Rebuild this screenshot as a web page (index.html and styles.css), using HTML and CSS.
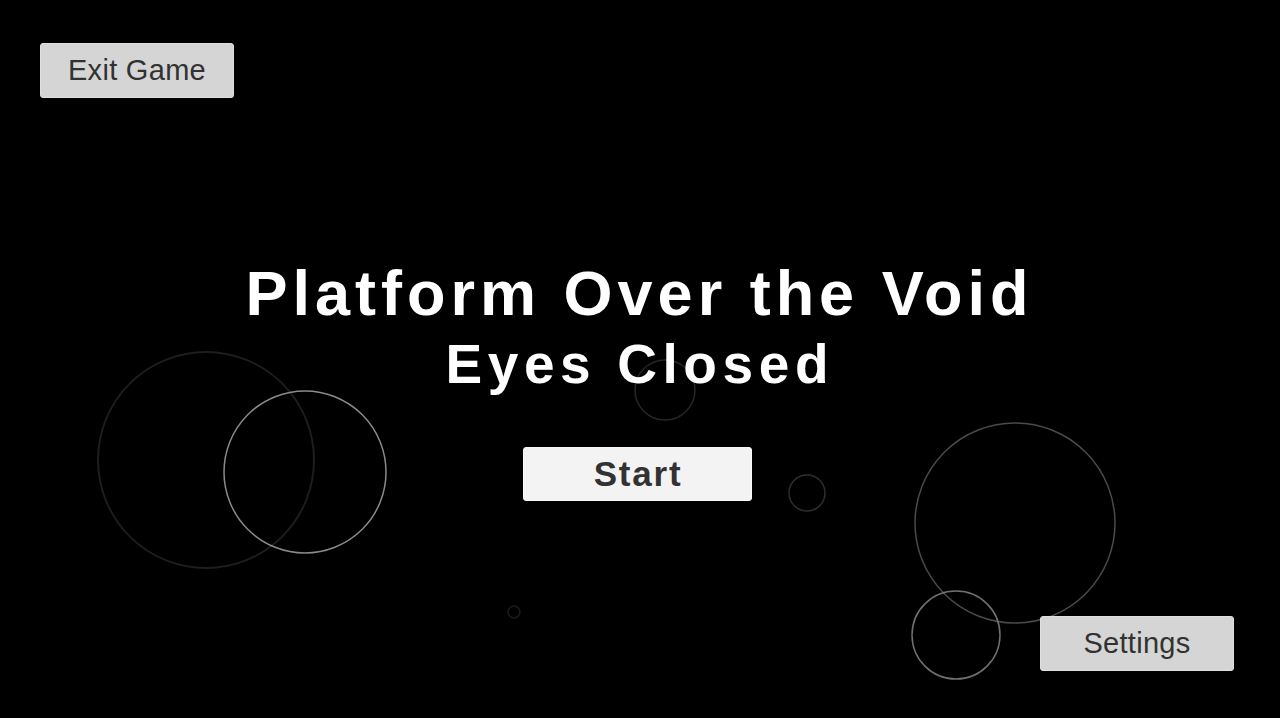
FILE: index.html
```html
<!DOCTYPE html>
<html lang="en">
<head>
<meta charset="utf-8">
<title>Platform Over the Void</title>
<link rel="stylesheet" href="styles.css">
</head>
<body>
<main class="screen">
  <svg class="backdrop" width="1280" height="718" viewBox="0 0 1280 718" aria-hidden="true">
    <circle cx="206" cy="460" r="108" stroke="#1d1d1d" stroke-width="2"/>
    <circle cx="305" cy="472" r="81" stroke="#8a8a8a" stroke-width="1.5"/>
    <circle cx="665" cy="390" r="30" stroke="#262626" stroke-width="1.5"/>
    <circle cx="807" cy="493" r="18" stroke="#2e2e2e" stroke-width="1.5"/>
    <circle cx="1015" cy="523" r="100" stroke="#4a4a4a" stroke-width="1.5"/>
    <circle cx="956" cy="635" r="44" stroke="#707070" stroke-width="1.5"/>
    <circle cx="514" cy="612" r="6" stroke="#1c1c1c" stroke-width="1.5"/>
  </svg>

  <div class="top-bar">
    <button class="btn btn-muted" type="button">Exit Game</button>
  </div>

  <section class="menu">
    <h1 class="title">Platform Over the Void</h1>
    <h2 class="subtitle">Eyes Closed</h2>
    <button class="btn btn-start" type="button">Start</button>
  </section>

  <div class="bottom-bar">
    <button class="btn btn-muted" type="button">Settings</button>
  </div>
</main>
</body>
</html>
```

FILE: styles.css
```css
* {
  box-sizing: border-box;
}

html,
body {
  margin: 0;
  padding: 0;
  background: #000;
}

body {
  font-family: "Liberation Sans", Arial, sans-serif;
  overflow: hidden;
}

.screen {
  position: relative;
  width: 1280px;
  height: 718px;
  display: grid;
  grid-template-rows: auto 1fr auto;
  padding: 43px 46px 47px 40px;
  background: #000;
}

/* decorative rings drawn behind the menu */
.backdrop {
  position: absolute;
  left: 0;
  top: 0;
  fill: none;
  z-index: 0;
}

.top-bar,
.menu,
.bottom-bar {
  position: relative;
  z-index: 1;
}

.top-bar {
  display: flex;
  justify-content: flex-start;
}

.bottom-bar {
  display: flex;
  justify-content: flex-end;
}

.menu {
  display: flex;
  flex-direction: column;
  align-items: center;
  padding-top: 164px;
}

.title {
  margin: 0 -5px 0 0;
  font-size: 63px;
  line-height: 1;
  font-weight: 700;
  letter-spacing: 5px;
  color: #fff;
}

.subtitle {
  margin: 12px -5.6px 0 0;
  font-size: 55px;
  line-height: 1;
  font-weight: 700;
  letter-spacing: 5.6px;
  color: #fff;
}

.btn {
  display: flex;
  align-items: center;
  justify-content: center;
  height: 55px;
  padding: 0;
  border: 1px solid #e0e0e0;
  border-radius: 3px;
  font-family: "Liberation Sans", Arial, sans-serif;
  color: #323232;
  cursor: pointer;
}

.btn-muted {
  width: 194px;
  background: #d5d5d5;
  font-size: 29px;
  letter-spacing: 0.3px;
}

.btn-start {
  width: 229px;
  height: 54px;
  margin-top: 55px;
  padding-left: 2px;
  background: #f3f3f3;
  border-color: #fafafa;
  font-size: 35px;
  font-weight: 700;
  letter-spacing: 1.8px;
}
```
